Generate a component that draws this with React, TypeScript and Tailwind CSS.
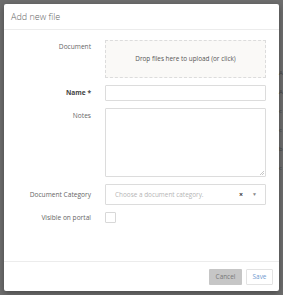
export default function App() {
  return (
    <div
      className="relative h-[295px] w-[283px] overflow-hidden bg-[#6e6e6e] pl-[4px] pt-[4px]"
      style={{ fontFamily: '"Open Sans", "Liberation Sans", sans-serif' }}
    >
      {/* faint page content behind the overlay */}
      <div className="absolute right-0 top-[70px] flex w-[4px] flex-col gap-[13px] text-[6px] leading-none text-[#3c3c3c]">
        <span>A</span>
        <span>A</span>
        <span>c</span>
        <span>c</span>
        <span>b</span>
        <span>c</span>
      </div>

      <div className="flex h-[287px] w-[275px] flex-col rounded-[2px] bg-white shadow-[0_2px_6px_rgba(0,0,0,0.35)]">
        <div className="flex h-[26px] items-center border-b border-[#ececec] pl-[7px]">
          <h1 className="text-[9px] font-light text-[#666]">Add new file</h1>
        </div>

        <div className="flex flex-1 flex-col gap-[7px] pr-[13px] pt-[10px]">
          <div className="flex">
            <div className="w-[87px] pt-[2px] text-right text-[6.6px] text-[#666]">Document</div>
            <div className="ml-[14px] flex h-[38px] flex-1 items-center justify-center border border-dashed border-[#dcdcdc] bg-[#faf9f7] text-[6.4px] text-[#555]">
              Drop files here to upload (or click)
            </div>
          </div>

          <div className="flex items-center">
            <div className="w-[87px] text-right text-[6.6px] font-bold text-[#444]">Name *</div>
            <div className="ml-[14px] h-[16px] flex-1 rounded-[1px] border border-[#dcdcdc] bg-white" />
          </div>

          <div className="flex">
            <div className="w-[87px] pt-[3px] text-right text-[6.6px] text-[#666]">Notes</div>
            <div className="relative ml-[14px] flex-1">
              <textarea className="block h-[69px] w-full resize-none rounded-[1px] border border-[#dcdcdc] bg-white outline-none" />
              <svg className="absolute bottom-[2px] right-[2px]" width="5" height="5" viewBox="0 0 5 5">
                <path d="M1 5L5 1M3 5L5 3" stroke="#b0b0b0" strokeWidth="0.7" />
              </svg>
            </div>
          </div>

          <div className="flex items-center">
            <div className="w-[87px] text-right text-[6.6px] text-[#666]">Document Category</div>
            <div className="ml-[14px] flex h-[21px] flex-1 items-center rounded-[1px] border border-[#dcdcdc] bg-white pl-[9px] pr-[8px]">
              <span className="flex-1 text-[6.4px] text-[#b5b5b5]">Choose a document category.</span>
              <span className="mr-[9px] text-[7px] font-bold leading-none text-[#333]">×</span>
              <span className="text-[5px] leading-none text-[#888]">▼</span>
            </div>
          </div>

          <div className="flex items-center">
            <div className="w-[87px] text-right text-[6.6px] text-[#666]">Visible on portal</div>
            <div className="ml-[14px] h-[11px] w-[11px] rounded-[1px] border border-[#d8d8d8] bg-white" />
          </div>
        </div>

        <div className="flex h-[30px] items-start justify-end gap-[4px] border-t border-[#ececec] pr-[6px] pt-[7px]">
          <button className="h-[16px] w-[33px] rounded-[1px] bg-[#c6c6c6] text-[6.4px] text-[#777]">Cancel</button>
          <button className="h-[16px] w-[27px] rounded-[1px] border border-[#e3e3e3] bg-white text-[6.4px] text-[#6f9ad0]">Save</button>
        </div>
      </div>
    </div>
  );
}
